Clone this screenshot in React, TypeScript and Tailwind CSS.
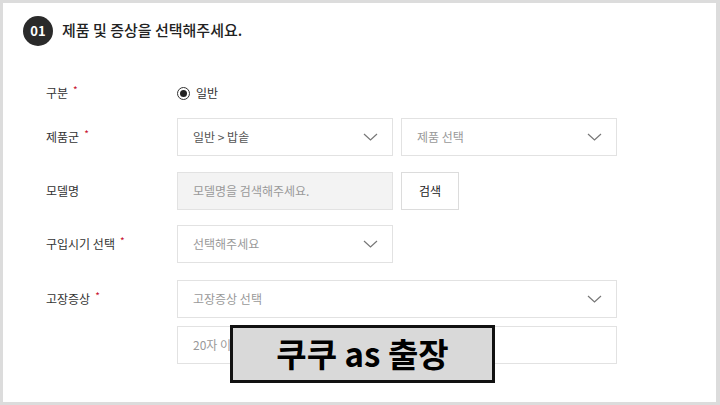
import React from "react"

const font = { fontFamily: '"Noto Sans CJK KR", "Noto Sans", sans-serif' }

function Chevron() {
  return (
    <svg width="15" height="8" viewBox="0 0 15 8" fill="none">
      <path d="M1 1l6.5 6L14 1" stroke="#777" strokeWidth="1.2" />
    </svg>
  )
}

function Label({ text, required }: { text: string; required?: boolean }) {
  return (
    <div className="w-[131px] shrink-0 text-[12px] text-[#333] flex items-start">
      <span>{text}</span>
      {required && <span className="text-[#c8102e] text-[10px] ml-[5px] -mt-[2px]">*</span>}
    </div>
  )
}

function Select({ text, width, muted }: { text: string; width: string; muted?: boolean }) {
  return (
    <div
      className={`${width} h-[38px] border border-[#e2e2e2] bg-white flex items-center justify-between pl-[15px] pr-[14px] text-[12px] ${
        muted ? "text-[#999]" : "text-[#555]"
      }`}
    >
      <span>{text}</span>
      <Chevron />
    </div>
  )
}

export default function App() {
  return (
    <div className="w-[720px] h-[405px] bg-[#dcdcdc] pt-[3px] pl-[3px] pr-[4px] pb-[3px] overflow-hidden" style={font}>
      <div className="relative bg-white w-full h-full">
        {/* Title */}
        <div className="flex items-center pt-[13px] pl-[20px]">
          <div className="w-[30px] h-[30px] rounded-full bg-[#2a2a2a] text-white text-[13px] font-semibold flex items-center justify-center">
            01
          </div>
          <h1 className="ml-[9px] text-[15px] font-medium text-[#222] -mt-[2px]">제품 및 증상을 선택해주세요.</h1>
        </div>

        {/* Form */}
        <div className="pl-[43px] flex flex-col">
          <div className="flex items-center h-[20px] mt-[37px]">
            <Label text="구분" required />
            <div className="flex items-center text-[12px] text-[#333]">
              <span className="w-[13px] h-[13px] rounded-full border border-[#333] flex items-center justify-center">
                <span className="w-[7px] h-[7px] rounded-full bg-[#222]" />
              </span>
              <span className="ml-[6px]">일반</span>
            </div>
          </div>

          <div className="flex items-center mt-[15px]">
            <Label text="제품군" required />
            <div className="flex gap-[8px]">
              <Select text="일반 > 밥솥" width="w-[216px]" />
              <Select text="제품 선택" width="w-[216px]" muted />
            </div>
          </div>

          <div className="flex items-center mt-[16px]">
            <Label text="모델명" />
            <div className="flex gap-[8px]">
              <div className="w-[216px] h-[38px] border border-[#e2e2e2] bg-[#f3f3f3] flex items-center pl-[15px] text-[12px] text-[#999]">
                모델명을 검색해주세요.
              </div>
              <button className="w-[58px] h-[38px] border border-[#dcdcdc] bg-white text-[12px] text-[#222]">
                검색
              </button>
            </div>
          </div>

          <div className="flex items-center mt-[15px]">
            <Label text="구입시기 선택" required />
            <Select text="선택해주세요" width="w-[216px]" muted />
          </div>

          <div className="flex items-center mt-[17px]">
            <Label text="고장증상" required />
            <Select text="고장증상 선택" width="w-[440px]" muted />
          </div>

          <div className="flex items-center mt-[8px]">
            <div className="w-[131px] shrink-0" />
            <div className="w-[440px] h-[38px] border border-[#e2e2e2] bg-white flex items-center pl-[15px] text-[12px] text-[#999]">
              20자 이내로 입력해주세요.
            </div>
          </div>
        </div>

        {/* Caption overlay */}
        <div className="absolute left-[227px] top-[322px] w-[265px] h-[58px] bg-[#d9d9d9] border-[3px] border-[#111] flex items-center justify-center">
          <span className="text-[33px] font-bold text-black leading-none -mt-[2px]">쿠쿠 as 출장</span>
        </div>
      </div>
    </div>
  )
}
